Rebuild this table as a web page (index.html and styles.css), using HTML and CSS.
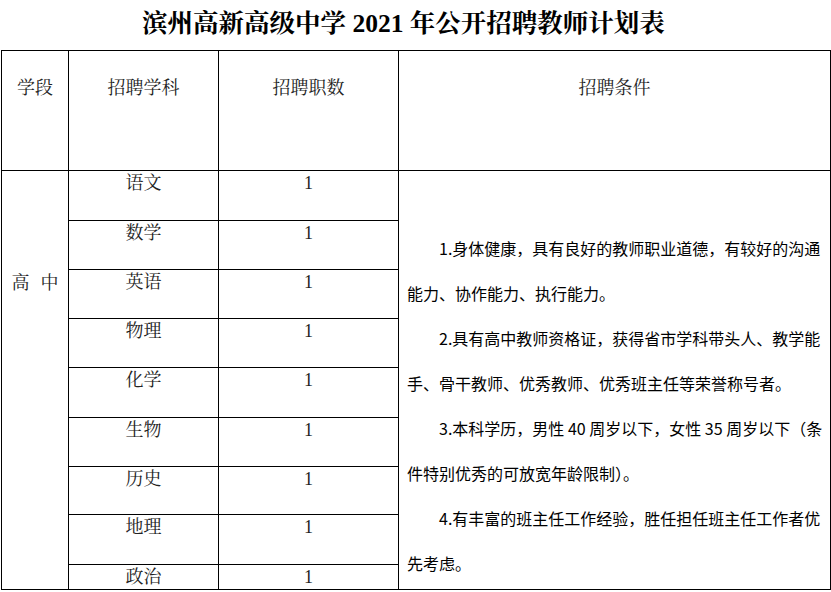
FILE: index.html
```html
<!DOCTYPE html>
<html lang="zh-CN">
<head>
<meta charset="utf-8">
<title>滨州高新高级中学 2021 年公开招聘教师计划表</title>
<link rel="stylesheet" href="styles.css">
</head>
<body>
<h1 class="title">滨州高新高级中学 2021 年公开招聘教师计划表</h1>
<table class="plan">
  <colgroup>
    <col class="c-stage">
    <col class="c-subject">
    <col class="c-count">
    <col class="c-cond">
  </colgroup>
  <thead>
    <tr class="head-row">
      <th>学段</th>
      <th>招聘学科</th>
      <th>招聘职数</th>
      <th>招聘条件</th>
    </tr>
  </thead>
  <tbody>
    <tr class="r50">
      <td class="stage" rowspan="9"><span>高</span><span class="gap">中</span></td>
      <td>语文</td>
      <td class="num">1</td>
      <td class="cond" rowspan="9">
        <p class="ind">1.身体健康，具有良好的教师职业道德，有较好的沟通</p>
        <p>能力、协作能力、执行能力。</p>
        <p class="ind">2.具有高中教师资格证，获得省市学科带头人、教学能</p>
        <p>手、骨干教师、优秀教师、优秀班主任等荣誉称号者。</p>
        <p class="ind">3.本科学历，男性 40 周岁以下，女性 35 周岁以下（条</p>
        <p>件特别优秀的可放宽年龄限制）。</p>
        <p class="ind">4.有丰富的班主任工作经验，胜任担任班主任工作者优</p>
        <p>先考虑。</p>
      </td>
    </tr>
    <tr class="r49"><td>数学</td><td class="num">1</td></tr>
    <tr class="r49"><td>英语</td><td class="num">1</td></tr>
    <tr class="r49"><td>物理</td><td class="num">1</td></tr>
    <tr class="r50"><td>化学</td><td class="num">1</td></tr>
    <tr class="r49"><td>生物</td><td class="num">1</td></tr>
    <tr class="r48"><td>历史</td><td class="num">1</td></tr>
    <tr class="r50"><td>地理</td><td class="num">1</td></tr>
    <tr class="r25"><td>政治</td><td class="num">1</td></tr>
  </tbody>
</table>
</body>
</html>
```

FILE: styles.css
```css
html, body {
  margin: 0;
  padding: 0;
  background: #ffffff;
}

body {
  width: 831px;
  height: 592px;
  overflow: hidden;
  color: #000;
  font-family: "Liberation Serif", "Noto Serif CJK SC", "Noto Sans CJK SC", serif;
}

.title {
  margin: 0;
  height: 50px;
  box-sizing: border-box;
  padding: 9px 24px 0 0;
  text-align: center;
  font-size: 25.5px;
  line-height: 30px;
  font-weight: bold;
  white-space: nowrap;
}

.plan {
  margin-left: 1px;
  border-collapse: collapse;
  table-layout: fixed;
  width: 829px;
}

.c-stage { width: 67px; }
.c-subject { width: 150px; }
.c-count { width: 180px; }
.c-cond { width: 432px; }

.plan th,
.plan td {
  border: 1px solid #000;
  padding: 0;
  vertical-align: top;
  text-align: center;
  font-size: 18px;
  line-height: 24px;
  font-weight: normal;
  color: #222;
}

.head-row { height: 120px; }
.head-row th { padding-top: 25px; }

.r50 { height: 50px; }
.r49 { height: 49px; }
.r48 { height: 48px; }
.r25 { height: 25px; }

.plan td.stage {
  padding-top: 100px;
}
.stage .gap { margin-left: 11px; }

.plan td.cond {
  text-align: left;
  padding: 55px 6px 0 8px;
  font-family: "Noto Sans CJK SC", "DejaVu Sans", sans-serif;
  font-size: 16px;
  line-height: 45px;
  color: #000;
}

.cond p {
  margin: 0;
  white-space: nowrap;
}

.cond p.ind { text-indent: 32px; }
```
